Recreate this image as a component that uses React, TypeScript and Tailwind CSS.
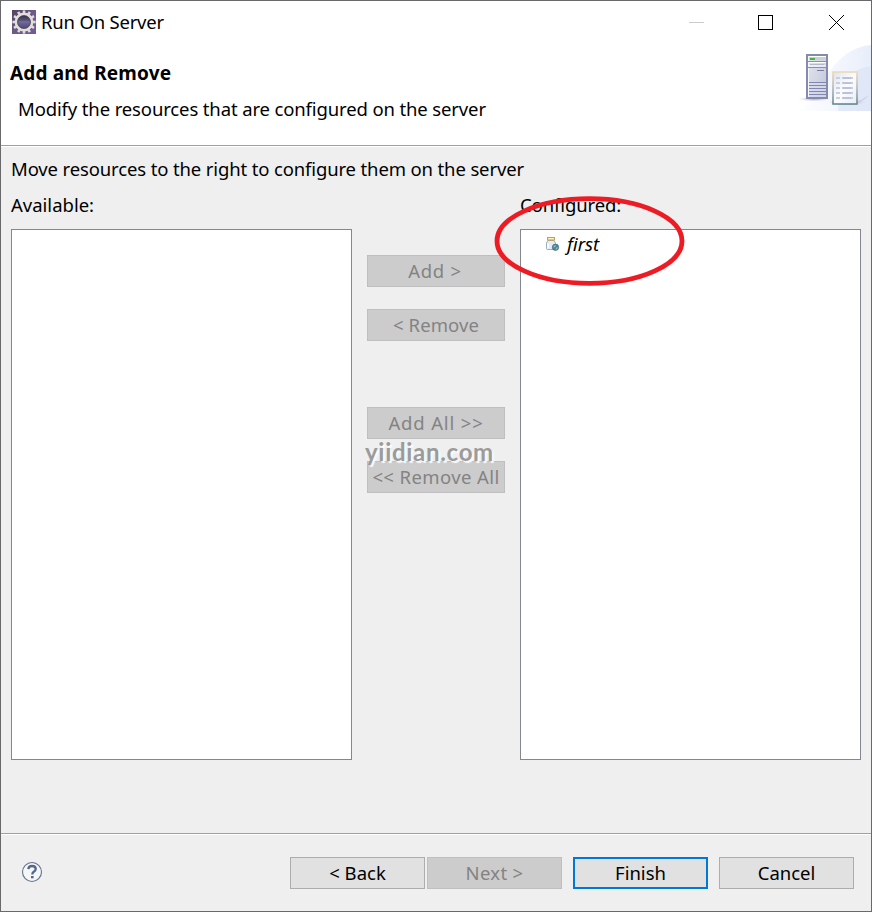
import React from 'react';
import clsx from 'clsx';

interface DialogButtonProps {
  label: string;
  textClass?: string;
  className?: string;
  disabled?: boolean;
  primary?: boolean;
}

function DialogButton({ label, textClass, className, disabled, primary }: DialogButtonProps) {
  return (
    <button
      disabled={disabled}
      className={clsx(
        'flex h-8 shrink-0 items-center justify-center whitespace-nowrap',
        disabled && 'border border-[#bfbfbf] bg-[#cccccc] text-[#838383]',
        !disabled && primary && 'border-2 border-[#0078d7] bg-[#e1e1e1]',
        !disabled && !primary && 'border border-[#adadad] bg-[#e1e1e1]',
        className
      )}
    >
      <span className={textClass}>{label}</span>
    </button>
  );
}

const teeth = Array.from({ length: 12 }, (_, i) => i * 30);

function GearIcon() {
  return (
    <svg width="24" height="24" viewBox="0 0 24 24" className="block">
      <defs>
        <linearGradient id="gearBg" x1="0" y1="0" x2="1" y2="1">
          <stop offset="0" stopColor="#51465f" />
          <stop offset="0.5" stopColor="#6d5a8a" />
          <stop offset="1" stopColor="#76599a" />
        </linearGradient>
        <linearGradient id="gearHole" x1="0" y1="0" x2="0" y2="1">
          <stop offset="0" stopColor="#2a263e" />
          <stop offset="0.55" stopColor="#6d6492" />
          <stop offset="1" stopColor="#494070" />
        </linearGradient>
      </defs>
      <rect width="24" height="24" fill="url(#gearBg)" />
      {teeth.map(angle => (
        <rect key={angle} x="10.7" y="0.4" width="2.6" height="4" fill="#dedbd8" transform={`rotate(${angle} 12 12)`} />
      ))}
      <circle cx="12" cy="12" r="8" fill="url(#gearHole)" stroke="#e2dfdb" strokeWidth="2.8" />
      <circle cx="12" cy="12" r="6.5" fill="none" stroke="#3f394e" strokeWidth="0.7" />
      <path d="M6.5 11.8h11" stroke="#8981a8" strokeWidth="0.6" />
    </svg>
  );
}

function ServerBanner() {
  return (
    <svg width="75" height="66" viewBox="0 0 75 66" className="block">
      <defs>
        <linearGradient id="sky" x1="0" y1="0" x2="1" y2="0">
          <stop offset="0" stopColor="#ffffff" />
          <stop offset="0.55" stopColor="#f3f6fd" />
          <stop offset="1" stopColor="#e8eefa" />
        </linearGradient>
        <linearGradient id="tower" x1="0" y1="0" x2="1" y2="1">
          <stop offset="0" stopColor="#e6e8f0" />
          <stop offset="1" stopColor="#bfc3d6" />
        </linearGradient>
        <linearGradient id="sheet" x1="0" y1="0" x2="1" y2="1">
          <stop offset="0" stopColor="#dfe4ec" />
          <stop offset="0.5" stopColor="#fbfcfe" />
          <stop offset="1" stopColor="#e9eef6" />
        </linearGradient>
        <linearGradient id="sheetEdge" x1="0" y1="0" x2="0" y2="1">
          <stop offset="0" stopColor="#efd9b5" />
          <stop offset="0.5" stopColor="#b2b8bb" />
          <stop offset="1" stopColor="#628990" />
        </linearGradient>
        <radialGradient id="shade">
          <stop offset="0" stopColor="#8c7f98" stopOpacity="0.65" />
          <stop offset="1" stopColor="#b5acc3" stopOpacity="0" />
        </radialGradient>
      </defs>
      <path d="M0 66C24 60 30 4 75 0V66Z" fill="url(#sky)" />
      <path d="M42 66C42 44 50 24 75 21V66Z" fill="#d8e3f6" opacity="0.6" />
      <ellipse cx="18" cy="54" rx="16" ry="2.5" fill="url(#shade)" />
      <ellipse cx="51" cy="57" rx="19" ry="3.5" fill="url(#shade)" />
      <path d="M60 58L73 50L69 54L60 59Z" fill="#c0bfd2" opacity="0.6" />
      <rect x="11" y="10" width="20" height="43" fill="url(#tower)" stroke="#858ab0" strokeWidth="2" />
      <path d="M12.5 11V52" stroke="#f6f8fb" />
      <path d="M13 11.5H30M13 17.5H30M13 21H30" stroke="#fff" />
      <rect x="13" y="12" width="16" height="3" fill="#c5d3d4" />
      <rect x="14" y="13" width="5" height="2" fill="#43b34a" />
      <path d="M12 16.5H30M12 22.5H30" stroke="#8a8eb2" />
      <path d="M14 19.5H28" stroke="#b5b8cf" />
      <path d="M21 25.5H28" stroke="#767baa" />
      <path d="M13 37.5H30M13 40.5H30M13 43.5H30M13 46.5H30M13 49.5H30" stroke="#8287b2" />
      <path d="M13 39H30M13 42H30M13 45H30M13 48H30M13 51H30" stroke="#dde1f0" />
      <rect x="37" y="27" width="24" height="32" fill="url(#sheet)" stroke="url(#sheetEdge)" strokeWidth="1.6" />
      <path
        d="M40 33H44M46 33H57M40 38H44M46 38H57M40 43H44M46 43H57M40 48H44M46 48H57M40 53H44M46 53H57"
        stroke="#c9cfe1"
        strokeWidth="2"
      />
      <path d="M47 33H55M47 38H55M47 43H55M47 48H55M47 53H55" stroke="#acb5d1" strokeWidth="1" />
    </svg>
  );
}

function ProjectIcon() {
  return (
    <svg width="15" height="16" viewBox="0 0 15 16" className="block shrink-0">
      <path d="M3 4.5H9L10.5 7V12.5Q10.5 13.5 9.5 13.5H2.5Q1.5 13.5 1.5 12.5V7Z" fill="#e3edf8" stroke="#9fadc4" />
      <path d="M3 7.5V12" stroke="#fff" strokeWidth="1.5" />
      <rect x="2.5" y="1.5" width="7" height="2.5" fill="#fff0ba" stroke="#c9a040" />
      <circle cx="10.5" cy="11.3" r="3.2" fill="#4c83a2" stroke="#37617e" strokeWidth="0.6" />
      <path d="M8.2 10.5Q9.2 8.5 11.2 9L10.5 10.5L8.9 11.8ZM11 11.7L13 11L12.2 13.2L10.6 13.7Z" fill="#8cc19c" />
    </svg>
  );
}

export default function App() {
  return (
    <div className="relative flex h-[912px] w-[872px] flex-col overflow-hidden border border-[#69696b] bg-[#efefef] font-['Noto_Sans','Open_Sans',sans-serif] text-[18.5px] leading-6 text-black">
      <header className="flex h-[144px] shrink-0 flex-col bg-white">
        <div className="flex h-11 shrink-0 items-start justify-between pl-[11px] pr-[26px] pt-[9px]">
          <div className="flex items-start gap-[5px]">
            <GearIcon />
            <span className="whitespace-nowrap tracking-[-0.2px]">Run On Server</span>
          </div>
          <div className="flex items-center pt-[5px]">
            <svg width="15" height="16" viewBox="0 0 15 16" shapeRendering="crispEdges">
              <path d="M0 7.5H15" stroke="#cccccc" />
            </svg>
            <svg className="ml-[54px]" width="16" height="16" viewBox="0 0 16 16" shapeRendering="crispEdges">
              <rect x="0.5" y="0.5" width="14" height="14" fill="none" stroke="#000" />
            </svg>
            <svg className="ml-[55px]" width="16" height="16" viewBox="0 0 16 16">
              <path d="M0 0L15 15M15 0L0 15" stroke="#000" />
            </svg>
          </div>
        </div>
        <div className="flex justify-between">
          <div className="pt-4">
            <h1 className="whitespace-nowrap pl-[9px] text-[19px] font-bold tracking-[0.17px]">Add and Remove</h1>
            <p className="mt-3 whitespace-nowrap pl-[17px] tracking-[-0.13px]">Modify the resources that are configured on the server</p>
          </div>
          <ServerBanner />
        </div>
      </header>
      <div className="h-0.5 shrink-0 border-t border-[#a0a0a0] bg-white" />

      <main className="flex h-[686px] shrink-0 flex-col px-2.5 pt-2.5">
        <p className="whitespace-nowrap tracking-[-0.135px]">Move resources to the right to configure them on the server</p>
        <div className="mt-3 flex">
          <section className="w-[341px]">
            <h2>Available:</h2>
            <div className="mt-3 h-[531px] border border-[#828790] bg-white" />
          </section>
          <div className="mx-[15px] flex w-[138px] flex-col pt-[62px]">
            <DialogButton label="Add >" textClass="tracking-[0.7px]" className="pr-0.5" disabled />
            <DialogButton label="< Remove" textClass="tracking-[0.1px]" className="mt-[22px]" disabled />
            <DialogButton label="Add All >>" textClass="tracking-[0.85px]" className="mt-[66px]" disabled />
            <DialogButton label="<< Remove All" textClass="tracking-[0.4px]" className="mt-[22px]" disabled />
          </div>
          <section className="w-[341px]">
            <h2 className="tracking-[-0.1px]">Configured:</h2>
            <div className="mt-3 h-[531px] border border-[#828790] bg-white">
              <div className="flex items-center gap-[7px] pl-6 pt-0.5">
                <ProjectIcon />
                <span className="italic">first</span>
              </div>
            </div>
          </section>
        </div>
      </main>

      <div className="h-0.5 shrink-0 border-t border-[#a0a0a0] bg-white" />
      <footer className="flex items-start justify-between pl-5 pr-[17px] pt-[22px]">
        <svg className="mt-1" width="22" height="22" viewBox="0 0 22 22">
          <circle cx="11" cy="11" r="9.5" fill="#f6f6f6" stroke="#61718f" strokeWidth="1.1" />
          <path d="M7.3 8.2Q7.6 5 11 5Q14.7 5 14.7 8Q14.7 9.7 12.8 10.8Q11.3 11.7 11.3 13.4" fill="none" stroke="#52668f" strokeWidth="2.3" />
          <rect x="10" y="15" width="2.6" height="2.3" fill="#52668f" />
        </svg>
        <div className="flex">
          <DialogButton label="< Back" className="w-[135px]" />
          <DialogButton label="Next >" textClass="tracking-[0.3px]" className="ml-0.5 w-[135px]" disabled />
          <DialogButton label="Finish" className="ml-[11px] w-[135px]" primary />
          <DialogButton label="Cancel" className="ml-[11px] w-[135px]" />
        </div>
      </footer>

      <span className="pointer-events-none absolute left-[364px] top-[439px] whitespace-nowrap font-['Lato',sans-serif] text-[24px] font-bold leading-6 tracking-[0.7px] text-[#9b9b9b] [text-shadow:2px_2px_1px_#fafafa]">
        yiidian.com
      </span>
      <svg className="pointer-events-none absolute left-[493px] top-[194px]" width="194" height="94" viewBox="0 0 194 94">
        <ellipse cx="95.5" cy="46" rx="92.5" ry="42.3" fill="none" stroke="#ed1c24" strokeWidth="4.8" />
      </svg>
    </div>
  );
}
